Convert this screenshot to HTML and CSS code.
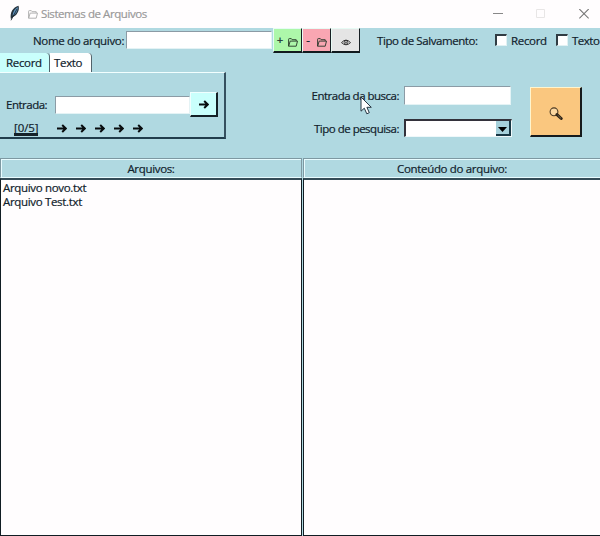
FILE: index.html
```html
<!DOCTYPE html>
<html lang="pt-BR">
<head>
<meta charset="utf-8">
<title>Sistemas de Arquivos</title>
<link rel="stylesheet" href="styles.css">
</head>
<body>
<svg class="defs" width="0" height="0">
  <symbol id="folder" viewBox="0 0 10 9"><path d="M.6 8.2V1.3Q.6.6 1.3.6H3.3L4.1 1.7H8.2V3M.6 8.2L2.2 3.1H9.5L8.2 8.2Z" fill="none" stroke="currentColor" stroke-width=".9"/></symbol>
  <symbol id="arrow" viewBox="0 0 10 9"><path d="M0 4.5H8.5M5.2 1L8.9 4.5L5.2 8" fill="none" stroke="currentColor" stroke-width="2"/></symbol>
</svg>
<div class="window">
  <header class="titlebar">
    <svg class="feather" viewBox="0 0 12 16"><path d="M2 14.5C.5 8 4 2 9.5.8C11 5 8 11 3.3 12.4Z" fill="#26333d"/><path d="M3.5 10.5C4 6.5 6 3.5 8.8 2C9 5.5 7 9 4.5 10.5Z" fill="#5d92bc"/><path d="M2 15.3L8 4" stroke="#17212a" stroke-width=".8"/></svg>
    <svg class="title-folder"><use href="#folder"/></svg>
    <h1>Sistemas de Arquivos</h1>
    <div class="controls">
      <svg viewBox="0 0 10 10"><path d="M0 4.5H10" stroke="#888"/></svg>
      <svg viewBox="0 0 10 10"><path d="M.5.5H8.5V8.5H.5Z" fill="none" stroke="#e8e6e6"/></svg>
      <svg viewBox="0 0 10 10"><path d="M.3 0L9.7 9.4M9.7 0L.3 9.4" stroke="#777" stroke-width="1.1"/></svg>
    </div>
  </header>
  <div class="toolbar">
    <label class="name-label">Nome do arquivo:</label>
    <div class="entry name-entry"></div>
    <button class="tool add"><span>+</span><svg class="folder"><use href="#folder"/></svg></button>
    <button class="tool remove"><span>-</span><svg class="folder"><use href="#folder"/></svg></button>
    <button class="tool view"><svg class="eye" viewBox="0 0 10 8"><path d="M.5 4.6Q5 -.4 9.5 4.6Q5 9 .5 4.6Z" fill="none" stroke="#222" stroke-width=".9"/><circle cx="5" cy="4.3" r="1.9" fill="none" stroke="#222" stroke-width=".8"/><circle cx="5" cy="4.3" r=".8" fill="#222"/></svg></button>
    <span class="save-label">Tipo de Salvamento:</span>
    <span class="check"></span><span class="record-label">Record</span>
    <span class="check"></span><span class="text-label">Texto</span>
  </div>
  <div class="middle">
    <section class="notebook">
      <nav class="tabs"><span class="tab active">Record</span><span class="tab">Texto</span></nav>
      <div class="pane">
        <div class="entry-row"><label>Entrada:</label><div class="entry"></div><button class="send"><svg class="arrow"><use href="#arrow"/></svg></button></div>
        <div class="step-row"><span class="count">[0/5]</span><div class="steps"><svg class="arrow"><use href="#arrow"/></svg><svg class="arrow"><use href="#arrow"/></svg><svg class="arrow"><use href="#arrow"/></svg><svg class="arrow"><use href="#arrow"/></svg><svg class="arrow"><use href="#arrow"/></svg></div></div>
      </div>
    </section>
    <section class="search">
      <label>Entrada da busca:</label><div class="entry"></div>
      <label>Tipo de pesquisa:</label><div class="combo"><span class="drop"><svg viewBox="0 0 9 5"><path d="M0 0H9L4.5 5Z"/></svg></span></div>
    </section>
    <button class="find"><svg viewBox="0 0 14 14"><circle cx="5" cy="4.8" r="3.9" fill="#fbd7a0" stroke="#4c3b25" stroke-width="1.1"/><path d="M8 7.6L12.2 11.5" stroke="#2e2519" stroke-width="3" stroke-linecap="round"/><path d="M8.7 8.2L12 11.3" stroke="#92754b" stroke-width=".8"/></svg></button>
    <svg class="cursor" viewBox="0 0 12 19"><path d="M1 1V15.2L4.3 12.2L6.8 17.8L9.3 16.7L6.9 11.3H11.3Z" fill="#fff" stroke="#263743"/></svg>
  </div>
  <main class="panels">
    <section class="panel"><h2>Arquivos:</h2><ul class="list"><li>Arquivo novo.txt</li><li>Arquivo Test.txt</li></ul></section>
    <section class="panel"><h2>Conteúdo do arquivo:</h2><div class="list"></div></section>
  </main>
</div>
</body>
</html>
```
FILE: styles.css
```css
* { box-sizing: border-box; }
body { margin: 0; overflow: hidden; }
.defs { display: none; }
.window { width: 600px; height: 536px; overflow: hidden; background: #b0d9e1; color: #10212b; font: 11.5px/14px "Open Sans", "Noto Sans", sans-serif; letter-spacing: -.33px; -webkit-text-stroke: .2px; white-space: nowrap; display: flex; flex-direction: column; }
button { font: inherit; color: inherit; padding: 0; border-radius: 0; }
svg { display: block; flex: none; }
.titlebar { height: 28px; flex: none; background: #fffdfe; display: flex; align-items: center; color: #999; padding: 0 11px 0 9px; }
.feather { width: 12px; height: 16px; margin-top: -2px; }
.title-folder { width: 10px; height: 9px; margin-left: 7px; color: #aaa; }
h1 { margin: 0 0 0 3px; font: inherit; letter-spacing: -.43px; }
.controls { margin-left: auto; display: flex; gap: 33px; }
.controls svg { width: 10px; height: 10px; }
.toolbar { height: 25px; flex: none; display: flex; align-items: flex-start; }
.toolbar > * { flex: none; }
.name-label { width: 93px; margin: 6px 0 0 33px; }
.entry { height: 18px; background: #fff; border: 1px solid #8b9ba5; border-right-color: #e4f3f5; border-bottom-color: #e4f3f5; }
.name-entry { width: 146px; margin-top: 3px; }
.tool { width: 29px; height: 25px; border: 1px solid #e8fbf5; border-right: 1px solid #171f23; border-bottom: 2px solid #111a1e; display: flex; align-items: center; justify-content: center; gap: 5px; }
.folder { width: 10px; height: 9px; color: #263528; margin-top: 4px; }
.remove { gap: 7px; }
.eye { width: 10px; height: 8px; margin-top: 3px; }
.add { background: #adf7aa; margin-left: 1px; }
.remove { background: #f9a6b2; }
.view { background: #e5e5e5; }
.save-label { width: 118px; margin: 6px 0 0 17px; letter-spacing: -.42px; }
.check { width: 12px; height: 12px; margin-top: 6px; background: #fff; border: 2px solid #303c43; border-width: 2px 1px 1px 2px; border-right-color: #e1f1f3; border-bottom-color: #e1f1f3; }
.record-label { width: 45px; margin: 6px 0 0 4px; }
.text-label { width: 28px; margin: 6px 0 0 4px; letter-spacing: -.5px; }
.middle { height: 105px; flex: none; display: flex; align-items: flex-start; position: relative; }
.notebook { width: 226px; }
.tabs { height: 19px; display: flex; }
.tab { width: 42px; height: 19px; padding: 3px 0 0 4px; background: #fff; border-right: 1px solid #52636b; border-radius: 0 4px 0 0; }
.tab.active { width: 50px; padding-left: 6px; background: #c9fffc; }
.pane { height: 67px; border: 1px solid #f2ffff; border-width: 1px 2px 2px 0; border-right-color: #35505f; border-bottom-color: #203d4c; padding: 19px 0 0 6px; }
.entry-row { display: flex; height: 26px; }
.entry-row label { width: 49px; padding-top: 6px; letter-spacing: -.5px; }
.entry-row .entry { width: 135px; margin-top: 4px; }
.send { width: 28px; height: 25px; background: #c9fffc; border: 1px solid #efffff; border-right: 2px solid #142026; border-bottom: 2px solid #142026; display: flex; align-items: center; justify-content: center; }
.arrow { width: 10px; height: 9px; color: #080c0e; }
.step-row { display: flex; height: 19px; padding-left: 8px; }
.count { width: 24px; height: 18px; padding-top: 3px; border-bottom: 3px solid #172229; line-height: 13px; letter-spacing: -.1px; text-decoration: underline; }
.steps { display: flex; gap: 9px; margin: 6px 0 0 19px; }
.search { width: 200px; margin: 33px 0 0 85px; display: grid; grid-template-columns: 93px 107px; row-gap: 14px; }
.search label { width: 88px; height: 19px; padding-top: 3px; text-align: right; letter-spacing: -.5px; }
.search .entry { height: 19px; }
.combo { width: 108px; height: 18px; background: #fff; border: 2px solid #33323b; border-right: 1px solid #eff8fa; border-bottom: 1px solid #eff8fa; display: flex; justify-content: flex-end; }
.drop { width: 15px; height: 15px; background: #a6d1db; border-right: 2px solid #183744; border-bottom: 2px solid #183744; display: grid; place-items: center; }
.drop svg { width: 9px; height: 5px; margin-top: 3px; }
.find { width: 52px; height: 50px; margin: 34px 0 0 19px; background: #fac77f; border: 1px solid #fff5cd; border-right: 2px solid #151a1c; border-bottom: 2px solid #151a1c; display: grid; place-items: center; }
.find svg { width: 14px; height: 14px; margin-top: 4px; }
.cursor { position: absolute; left: 360px; top: 43px; width: 12px; height: 19px; }
.panels { height: 378px; display: grid; grid-template-columns: 302px 298px; }
.panel h2 { height: 20px; margin: 0; border: 1px solid #7e99a2; border-bottom: 1px solid #e8fcff; box-shadow: inset 1px 1px #e8fcff; padding-top: 3px; font: inherit; text-align: center; }
.list { height: 358px; margin: 0; padding: 1px 2px; list-style: none; background: #fffdfe; border: 1px solid #111d23; border-top: 2px solid #344c57; }
.panel:last-child { border-left: 1px solid #b0d9e1; }
.panel:last-child .list, .panel:last-child h2 { border-right: 0; }
```
